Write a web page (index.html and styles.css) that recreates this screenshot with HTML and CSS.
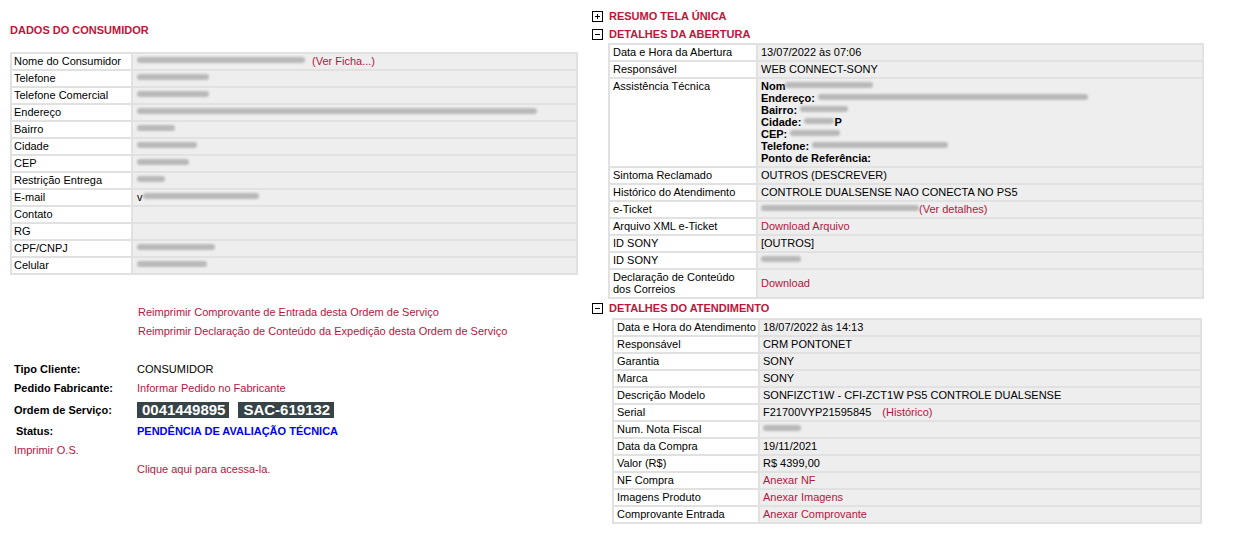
FILE: index.html
```html
<!DOCTYPE html>
<html lang="pt-BR">
<head>
<meta charset="utf-8">
<title>Ordem de Serviço</title>
<link rel="stylesheet" href="styles.css">
</head>
<body>
<div class="page">
  <section class="col-left">
    <h2 class="title">DADOS DO CONSUMIDOR</h2>
    <table class="grid grid-consumer">
      <tr><td class="lbl">Nome do Consumidor</td><td class="val"><span class="blur w168"></span> <a class="lnk ml4">(Ver Ficha...)</a></td></tr>
      <tr><td class="lbl">Telefone</td><td class="val"><span class="blur w72"></span></td></tr>
      <tr><td class="lbl">Telefone Comercial</td><td class="val"><span class="blur w72"></span></td></tr>
      <tr><td class="lbl">Endereço</td><td class="val"><span class="blur w400"></span></td></tr>
      <tr><td class="lbl">Bairro</td><td class="val"><span class="blur w38"></span></td></tr>
      <tr><td class="lbl">Cidade</td><td class="val"><span class="blur w60"></span></td></tr>
      <tr><td class="lbl">CEP</td><td class="val"><span class="blur w52"></span></td></tr>
      <tr><td class="lbl">Restrição Entrega</td><td class="val"><span class="blur w28"></span></td></tr>
      <tr><td class="lbl">E-mail</td><td class="val">v<span class="blur w116"></span></td></tr>
      <tr><td class="lbl">Contato</td><td class="val"></td></tr>
      <tr><td class="lbl">RG</td><td class="val"></td></tr>
      <tr><td class="lbl">CPF/CNPJ</td><td class="val"><span class="blur w78"></span></td></tr>
      <tr><td class="lbl">Celular</td><td class="val"><span class="blur w70"></span></td></tr>
    </table>

    <div class="reprint">
      <a class="lnk">Reimprimir Comprovante de Entrada desta Ordem de Serviço</a>
      <a class="lnk">Reimprimir Declaração de Conteúdo da Expedição desta Ordem de Serviço</a>
    </div>

    <div class="info">
      <div class="info-lbl">Tipo Cliente:</div>
      <div class="info-val">CONSUMIDOR</div>
      <div class="info-lbl">Pedido Fabricante:</div>
      <div class="info-val"><a class="lnk">Informar Pedido no Fabricante</a></div>
      <div class="info-lbl tall">Ordem de Serviço:</div>
      <div class="info-val tall badges"><span class="badge">0041449895</span><span class="badge">SAC-619132</span></div>
      <div class="info-lbl status-lbl">Status:</div>
      <div class="info-val status">PENDÊNCIA DE AVALIAÇÃO TÉCNICA</div>
      <div class="info-lbl"><a class="lnk normal">Imprimir O.S.</a></div>
      <div class="info-val"></div>
      <div class="info-lbl"></div>
      <div class="info-val"><a class="lnk">Clique aqui para acessa-la.</a></div>
    </div>
  </section>

  <section class="col-right">
    <h3 class="sec">
      <svg class="tog" width="11" height="11" viewBox="0 0 11 11"><rect x="0.5" y="0.5" width="10" height="10" fill="#fff" stroke="#000"/><path d="M3 5.5h5M5.5 3v5" stroke="#000" stroke-width="1"/></svg>
      <span>RESUMO TELA ÚNICA</span>
    </h3>
    <h3 class="sec">
      <svg class="tog" width="11" height="11" viewBox="0 0 11 11"><rect x="0.5" y="0.5" width="10" height="10" fill="#fff" stroke="#000"/><path d="M3 5.5h5" stroke="#000" stroke-width="1"/></svg>
      <span>DETALHES DA ABERTURA</span>
    </h3>
    <table class="grid grid-open">
      <tr><td class="lbl">Data e Hora da Abertura</td><td class="val">13/07/2022 às 07:06</td></tr>
      <tr><td class="lbl">Responsável</td><td class="val">WEB CONNECT-SONY</td></tr>
      <tr class="multi"><td class="lbl">Assistência Técnica</td><td class="val">
        <b>Nom</b><span class="blur w88"></span><br>
        <b>Endereço:</b> <span class="blur w270"></span><br>
        <b>Bairro:</b> <span class="blur w48"></span><br>
        <b>Cidade:</b> <span class="blur w30"></span><b>P</b><br>
        <b>CEP:</b> <span class="blur w50"></span><br>
        <b>Telefone:</b> <span class="blur w136"></span><br>
        <b>Ponto de Referência:</b>
      </td></tr>
      <tr><td class="lbl">Sintoma Reclamado</td><td class="val">OUTROS (DESCREVER)</td></tr>
      <tr><td class="lbl">Histórico do Atendimento</td><td class="val">CONTROLE DUALSENSE NAO CONECTA NO PS5</td></tr>
      <tr><td class="lbl">e-Ticket</td><td class="val"><span class="blur w158"></span><a class="lnk">(Ver detalhes)</a></td></tr>
      <tr><td class="lbl">Arquivo XML e-Ticket</td><td class="val"><a class="lnk">Download Arquivo</a></td></tr>
      <tr><td class="lbl">ID SONY</td><td class="val">[OUTROS]</td></tr>
      <tr><td class="lbl">ID SONY</td><td class="val"><span class="blur w40"></span></td></tr>
      <tr class="multi"><td class="lbl">Declaração de Conteúdo<br>dos Correios</td><td class="val mid"><a class="lnk">Download</a></td></tr>
    </table>

    <h3 class="sec">
      <svg class="tog" width="11" height="11" viewBox="0 0 11 11"><rect x="0.5" y="0.5" width="10" height="10" fill="#fff" stroke="#000"/><path d="M3 5.5h5" stroke="#000" stroke-width="1"/></svg>
      <span>DETALHES DO ATENDIMENTO</span>
    </h3>
    <table class="grid grid-att">
      <tr><td class="lbl">Data e Hora do Atendimento</td><td class="val">18/07/2022 às 14:13</td></tr>
      <tr><td class="lbl">Responsável</td><td class="val">CRM PONTONET</td></tr>
      <tr><td class="lbl">Garantia</td><td class="val">SONY</td></tr>
      <tr><td class="lbl">Marca</td><td class="val">SONY</td></tr>
      <tr><td class="lbl">Descrição Modelo</td><td class="val">SONFIZCT1W - CFI-ZCT1W PS5 CONTROLE DUALSENSE</td></tr>
      <tr><td class="lbl">Serial</td><td class="val">F21700VYP21595845 <a class="lnk ml6">(Histórico)</a></td></tr>
      <tr><td class="lbl">Num. Nota Fiscal</td><td class="val"><span class="blur w38"></span></td></tr>
      <tr><td class="lbl">Data da Compra</td><td class="val">19/11/2021</td></tr>
      <tr><td class="lbl">Valor (R$)</td><td class="val">R$ 4399,00</td></tr>
      <tr><td class="lbl">NF Compra</td><td class="val"><a class="lnk">Anexar NF</a></td></tr>
      <tr><td class="lbl">Imagens Produto</td><td class="val"><a class="lnk">Anexar Imagens</a></td></tr>
      <tr><td class="lbl">Comprovante Entrada</td><td class="val"><a class="lnk">Anexar Comprovante</a></td></tr>
    </table>
  </section>
</div>
</body>
</html>
```

FILE: styles.css
```css
html, body {
  margin: 0;
  padding: 0;
  background: #fff;
}
body {
  font-family: "Liberation Sans", Arial, sans-serif;
  font-size: 11px;
  color: #000;
}
.page {
  display: flex;
  align-items: flex-start;
}
.col-left {
  width: 568px;
  padding: 22px 0 0 10px;
}
.col-right {
  width: 613px;
  margin-left: 14px;
  padding-top: 7px;
}
.title {
  margin: 0 0 14px;
  font-size: 11px;
  line-height: 16px;
  font-weight: bold;
  color: #c0143a;
}
.lnk {
  color: #b3163f;
  text-decoration: none;
  cursor: pointer;
}
.ml4 { margin-left: 4px; }
.ml6 { margin-left: 8px; }

/* data grids */
.grid {
  border-collapse: collapse;
  table-layout: fixed;
}
.grid td {
  border: 2px solid #e1e1e1;
  padding: 1px 3px 2px;
  line-height: 12px;
  height: 12px;
  white-space: nowrap;
  vertical-align: top;
}
.grid .lbl { background: #fff; }
.grid .val { background: #eee; }
.grid .val.mid { vertical-align: middle; }

.grid-consumer { width: 568px; }
.grid-consumer .lbl { width: 114px; padding-left: 2px; }
.grid-consumer .val { padding-left: 4px; }

.grid-open { width: 596px; margin-left: 16px; }
.grid-open .lbl { width: 140px; }

.grid-att { width: 590px; margin-left: 20px; margin-top: 1px; }
.grid-att .lbl { width: 138px; }

/* blurred, redacted values */
.blur {
  display: inline-block;
  height: 6px;
  vertical-align: 2px;
  border-radius: 3px;
  background: #b9b9b9;
  filter: blur(1.1px);
}
.w28 { width: 28px; }
.w30 { width: 30px; }
.w38 { width: 38px; }
.w40 { width: 40px; }
.w48 { width: 48px; }
.w50 { width: 50px; }
.w52 { width: 52px; }
.w60 { width: 60px; }
.w70 { width: 70px; }
.w72 { width: 72px; }
.w78 { width: 78px; }
.w88 { width: 88px; }
.w116 { width: 116px; }
.w136 { width: 136px; }
.w158 { width: 158px; }
.w168 { width: 168px; }
.w270 { width: 270px; }
.w400 { width: 400px; }

/* section headings on the right */
.sec {
  margin: 0;
  display: flex;
  align-items: center;
  gap: 6px;
  height: 18px;
  padding-left: 0;
  font-size: 11px;
  font-weight: bold;
  color: #c0143a;
}
.tog { flex: none; }

/* reprint links */
.reprint {
  margin: 28px 0 0 128px;
  display: flex;
  flex-direction: column;
}
.reprint .lnk { line-height: 19px; }

/* info block */
.info {
  margin: 19px 0 0 4px;
  display: grid;
  grid-template-columns: 123px auto;
  line-height: 19px;
}
.info-lbl { font-weight: bold; }
.info-lbl .normal { font-weight: normal; }
.status-lbl { padding-left: 2px; }
.tall {
  height: 24px;
  display: flex;
  align-items: center;
}
.badges { gap: 9px; }
.badge {
  background: #364447;
  color: #fff;
  font-weight: bold;
  font-size: 15px;
  line-height: 16px;
  padding: 0 4px 0 5px;
}
.status {
  color: #0000f5;
  font-weight: bold;
}
```
